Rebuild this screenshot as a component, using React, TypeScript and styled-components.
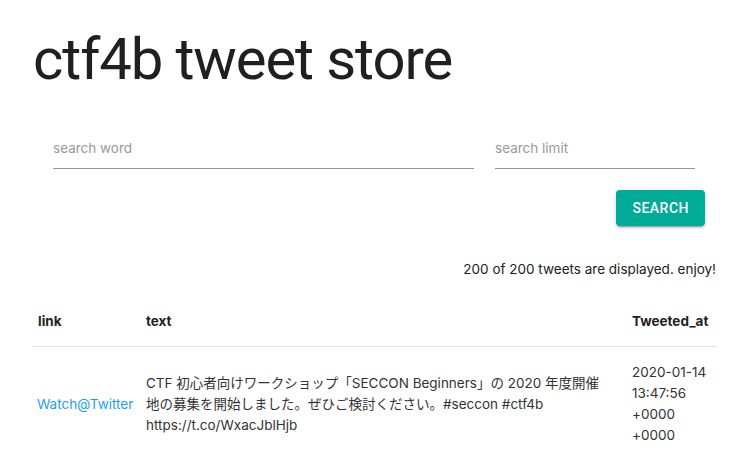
import React from 'react';
import styled, { createGlobalStyle } from 'styled-components';

const GlobalStyle = createGlobalStyle`
    body {
        margin: 0;
        background: #fff;
        font-family: Inter, 'Noto Sans CJK JP', sans-serif;
        color: rgba(0, 0, 0, 0.87);
    }
`;

const Page = styled.div`
    padding: 23px 18px 0 33px;
`;

const Title = styled.h1`
    margin: 0;
    font-family: Roboto, sans-serif;
    font-size: 58px;
    font-weight: 400;
    line-height: 72px;
    color: #202020;
    letter-spacing: -1.1px;
`;

const Form = styled.form`
    margin-top: 36px;
    padding: 0 21px 0 20px;
    display: flex;
    gap: 21px;
`;

const Field = styled.input<{ grow?: boolean; width?: string }>`
    flex: ${(props) => (props.grow ? '1' : 'none')};
    width: ${(props) => props.width || 'auto'};
    min-width: 0;
    border: none;
    border-bottom: 1px solid rgba(0, 0, 0, 0.42);
    padding: 8px 0 10px;
    font-family: Inter, sans-serif;
    font-size: 13.5px;
    line-height: 19px;
    background: transparent;
    outline: none;
    &::placeholder {
        color: #9a9a9a;
    }
`;

const ButtonRow = styled.div`
    display: flex;
    justify-content: flex-end;
    padding-right: 11px;
    margin-top: 21px;
`;

const SearchButton = styled.button`
    height: 36px;
    padding: 0 16px;
    border: none;
    border-radius: 4px;
    background: #00ab97;
    color: #fff;
    font-family: Roboto, sans-serif;
    font-size: 14px;
    font-weight: 500;
    letter-spacing: 0.5px;
    box-shadow: 0 3px 1px -2px rgba(0, 0, 0, 0.2), 0 2px 2px 0 rgba(0, 0, 0, 0.14),
        0 1px 5px 0 rgba(0, 0, 0, 0.12);
    cursor: pointer;
`;

const Count = styled.p`
    margin: 33px 0 0;
    text-align: right;
    font-size: 13.5px;
    line-height: 21px;
    color: #222;
`;

const Table = styled.table`
    margin-top: 15px;
    width: 683px;
    border-collapse: collapse;
    table-layout: fixed;
`;

const Th = styled.th<{ width: string }>`
    box-sizing: border-box;
    width: ${(props) => props.width};
    text-align: left;
    padding: 16px 4px 14px 5px;
    font-size: 13.5px;
    font-weight: 700;
    line-height: 21px;
    color: #222;
    border-bottom: 1px solid #e0e0e0;
`;

const Td = styled.td<{ right?: string }>`
    padding: 15px ${(props) => props.right || '4px'} 16px 5px;
    font-size: 13.5px;
    line-height: 21px;
    color: #333;
    vertical-align: middle;
`;

const TwitterLink = styled.a`
    color: #1da1f2;
    text-decoration: none;
    margin-left: -1px;
`;

export default function App() {
    return (
        <>
            <GlobalStyle />
            <Page>
                <Title>ctf4b tweet store</Title>
                <Form onSubmit={(e) => e.preventDefault()}>
                    <Field grow placeholder="search word" />
                    <Field width="200px" placeholder="search limit" />
                </Form>
                <ButtonRow>
                    <SearchButton type="button">SEARCH</SearchButton>
                </ButtonRow>
                <Count>200 of 200 tweets are displayed. enjoy!</Count>
                <Table>
                    <thead>
                        <tr>
                            <Th width="108px">link</Th>
                            <Th width="486px">text</Th>
                            <Th width="89px">Tweeted_at</Th>
                        </tr>
                    </thead>
                    <tbody>
                        <tr>
                            <Td>
                                <TwitterLink href="#">Watch@Twitter</TwitterLink>
                            </Td>
                            <Td right="16px">
                                CTF 初心者向けワークショップ「SECCON Beginners」の 2020 年度開催地の募集を開始しました。ぜひご検討ください。#seccon #ctf4b https://t.co/WxacJblHjb
                            </Td>
                            <Td>2020-01-14 13:47:56 +0000 +0000</Td>
                        </tr>
                    </tbody>
                </Table>
            </Page>
        </>
    );
}
